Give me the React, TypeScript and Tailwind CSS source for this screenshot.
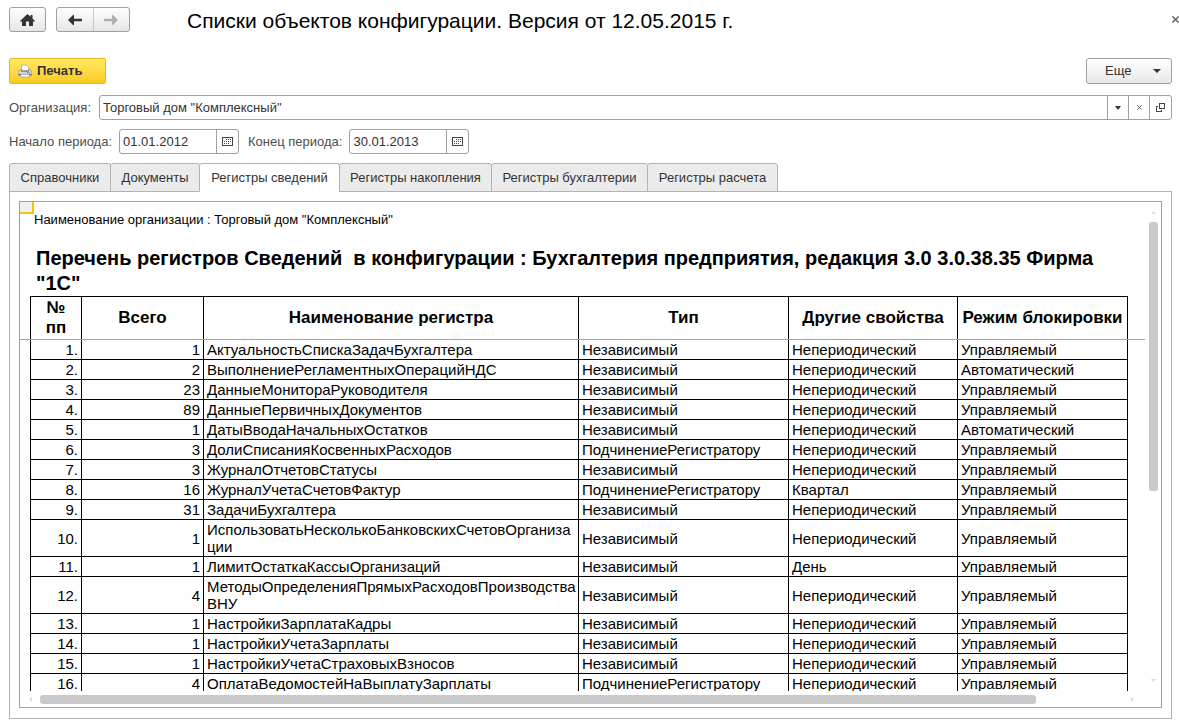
import React, { useState } from 'react';

interface RegisterRow {
  total: number;
  name: string;
  type: string;
  props: string;
  lock: string;
}

const IND = 'Независимый';
const SUB = 'ПодчинениеРегистратору';
const NP = 'Непериодический';
const MAN = 'Управляемый';
const AUTO = 'Автоматический';

const ROWS: RegisterRow[] = [
  { total: 1, name: 'АктуальностьСпискаЗадачБухгалтера', type: IND, props: NP, lock: MAN },
  { total: 2, name: 'ВыполнениеРегламентныхОперацийНДС', type: IND, props: NP, lock: AUTO },
  { total: 23, name: 'ДанныеМонитораРуководителя', type: IND, props: NP, lock: MAN },
  { total: 89, name: 'ДанныеПервичныхДокументов', type: IND, props: NP, lock: MAN },
  { total: 1, name: 'ДатыВводаНачальныхОстатков', type: IND, props: NP, lock: AUTO },
  { total: 3, name: 'ДолиСписанияКосвенныхРасходов', type: SUB, props: NP, lock: MAN },
  { total: 3, name: 'ЖурналОтчетовСтатусы', type: IND, props: NP, lock: MAN },
  { total: 16, name: 'ЖурналУчетаСчетовФактур', type: SUB, props: 'Квартал', lock: MAN },
  { total: 31, name: 'ЗадачиБухгалтера', type: IND, props: NP, lock: MAN },
  { total: 1, name: 'ИспользоватьНесколькоБанковскихСчетовОрганизации', type: IND, props: NP, lock: MAN },
  { total: 1, name: 'ЛимитОстаткаКассыОрганизаций', type: IND, props: 'День', lock: MAN },
  { total: 4, name: 'МетодыОпределенияПрямыхРасходовПроизводстваВНУ', type: IND, props: NP, lock: MAN },
  { total: 1, name: 'НастройкиЗарплатаКадры', type: IND, props: NP, lock: MAN },
  { total: 1, name: 'НастройкиУчетаЗарплаты', type: IND, props: NP, lock: MAN },
  { total: 1, name: 'НастройкиУчетаСтраховыхВзносов', type: IND, props: NP, lock: MAN },
  { total: 4, name: 'ОплатаВедомостейНаВыплатуЗарплаты', type: SUB, props: NP, lock: MAN },
];

const REPORT_TITLE =
  'Перечень регистров Сведений\u00a0 в конфигурации : Бухгалтерия предприятия, редакция 3.0 3.0.38.35 Фирма "1С"';

const TABS = [
  { label: 'Справочники', width: 'w-[102px]' },
  { label: 'Документы', width: 'w-[90px]' },
  { label: 'Регистры сведений', width: 'w-[141px]' },
  { label: 'Регистры накопления', width: 'w-[153px]' },
  { label: 'Регистры бухгалтерии', width: 'w-[157px]' },
  { label: 'Регистры расчета', width: 'w-[131px]' },
];

const HomeIcon = () => (
  <svg width="15" height="12" viewBox="0 0 15 12" fill="#333">
    <path d="M7.5 0 10.5 2.7V1h2v3.5L15 7v.6h-2V12H9V7.5H6V12H2V7.6H0V7z" />
  </svg>
);

const ArrowIcon: React.FC<{ color: string; flip?: boolean }> = ({ color, flip }) => (
  <svg width="14" height="10" viewBox="0 0 14 10" fill={color} className={flip ? 'rotate-180' : ''}>
    <path d="M0 5 5 0h1v3.8h8v2.4H6V10H5z" />
  </svg>
);

const PrinterIcon = () => (
  <svg width="14" height="14" viewBox="0 0 14 14">
    <path d="M3.5 7V1h5l2 2v4z" fill="#fff" stroke="#b9a98a" strokeWidth="0.8" />
    <path d="M2 5.5h1.5V7h7V5.5H12l1.7 2.3v3.4H.3V7.8z" fill="#d5d5d8" stroke="#8b8d92" strokeWidth="0.7" />
    <path d="M3 6.6h8v1H3z" fill="#77787d" />
    <path d="M9 8.3h1.3v1H9z" fill="#e04a2a" />
    <path d="M10.7 8.3H12v1h-1.3z" fill="#3aa545" />
    <path d="M.8 10h12.4v1.3H.8z" fill="#6d6e74" />
    <path d="M3 10.3h8l.5 2.7h-9z" fill="#fff" stroke="#8e8e8e" strokeWidth="0.6" />
  </svg>
);

const CalendarIcon = () => (
  <svg width="11" height="9" viewBox="0 0 11 9" shapeRendering="crispEdges">
    <path d="M0 0h11v9H0zM1 1v7h9V1z" fill="#444" fillRule="evenodd" />
    <path d="M4 2h1v1H4zM6 2h1v1H6zM8 2h1v1H8zM2 4h1v1H2zM4 4h1v1H4zM6 4h1v1H6zM8 4h1v1H8zM2 6h1v1H2zM4 6h1v1H4zM6 6h1v1H6z" fill="#444" />
  </svg>
);

const OpenIcon = () => (
  <svg width="9" height="9" viewBox="0 0 9 9" fill="none" stroke="#444" shapeRendering="crispEdges">
    <path d="M3.5.5h5v5h-5zM2 3.5H.5v5h5V7" />
  </svg>
);

const CrossIcon: React.FC<{ size: number }> = ({ size }) => (
  <svg width={size} height={size} viewBox="0 0 5 5" stroke="#555" strokeWidth="0.9">
    <path d="M.3.3 4.7 4.7M4.7.3.3 4.7" />
  </svg>
);

const Caret: React.FC<{ width: number }> = ({ width }) => (
  <svg width={width} height="4" viewBox="0 0 8 4" preserveAspectRatio="none" fill="#333">
    <path d="M0 0h8L4 4z" />
  </svg>
);

const ScrollArrow: React.FC<{ d: string }> = ({ d }) => (
  <svg width="5" height="5" viewBox="0 0 5 5" fill="#dcdcdc" className="shrink-0">
    <path d={d} />
  </svg>
);

const DateField: React.FC<{ id: string; label: string; value: string }> = ({ id, label, value }) => (
  <div className="flex items-center gap-[7px]">
    <label htmlFor={id} className="text-[#4d4d4d]">{label}</label>
    <div className="flex h-[25px] w-[120px] rounded-[3px] border border-[#a0a0a0]">
      <input id={id} type="text" defaultValue={value} className="min-w-0 flex-1 px-[3px] outline-none" />
      <button type="button" aria-label="Выбрать дату" className="flex w-[22px] items-center justify-center border-l border-[#a0a0a0]">
        <CalendarIcon />
      </button>
    </div>
  </div>
);

const Report = () => (
  <div className="relative min-w-0 overflow-hidden text-black">
    {/* current cell marker */}
    <div className="absolute top-0 left-0 h-3 w-[14px] border-r-2 border-b-2 border-[#fcc200] bg-[#f0f0f0]" />
    <p className="h-11 pt-2 pl-[14px] leading-5">
      Наименование организации : Торговый дом "Комплексный"
    </p>
    <h2 className="w-[1098px] pl-4 text-[20px] leading-[25px] font-bold">{REPORT_TITLE}</h2>
    <table className="ml-[10px] w-[1098px] table-fixed border-collapse text-[15px] leading-[17px] [&_td]:border [&_td]:border-black [&_td]:py-px [&_td]:pl-[3px] [&_th]:border [&_th]:border-black [&_th]:py-px">
      <colgroup>
        <col className="w-[51px]" />
        <col className="w-[122px]" />
        <col className="w-[375px]" />
        <col className="w-[210px]" />
        <col className="w-[169px]" />
        <col />
      </colgroup>
      <thead className="text-[17px] leading-5">
        <tr>
          <th className="px-2">№ пп</th>
          <th>Всего</th>
          <th>Наименование регистра</th>
          <th>Тип</th>
          <th>Другие свойства</th>
          <th className="whitespace-nowrap">Режим блокировки</th>
        </tr>
      </thead>
      <tbody>
        {ROWS.map((row, index) => (
          <tr key={row.name}>
            <td className="pr-[3px] text-right">{`${index + 1}.`}</td>
            <td className="pr-[3px] text-right">{row.total}</td>
            <td className="break-all">{row.name}</td>
            <td>{row.type}</td>
            <td>{row.props}</td>
            <td>{row.lock}</td>
          </tr>
        ))}
      </tbody>
    </table>
    {/* edge of the frozen header */}
    <div className="absolute top-[137px] left-0 h-px w-full bg-[#a0a0a0]" />
  </div>
);

const App: React.FC = () => {
  const [activeTab, setActiveTab] = useState<number>(2);

  return (
    <div className="flex h-screen flex-col overflow-hidden bg-white pt-[7px] pr-[7px] pb-1 pl-[9px] font-['Liberation_Sans',Arial,sans-serif] text-[13px] text-[#333]">
      <header className="flex h-[25px] shrink-0 items-center">
        <button type="button" aria-label="Домой" className="flex h-[25px] w-[37px] items-center justify-center rounded-[3px] border border-[#a0a0a0] bg-linear-to-b from-white to-[#e6e6e6]">
          <HomeIcon />
        </button>
        <div className="ml-[10px] flex h-[25px] w-[74px] rounded-[3px] border border-[#a0a0a0] bg-linear-to-b from-white to-[#e6e6e6]">
          <button type="button" aria-label="Назад" className="flex flex-1 items-center justify-center border-r border-[#c8c8c8]">
            <ArrowIcon color="#333" />
          </button>
          <button type="button" aria-label="Вперед" className="flex flex-1 items-center justify-center">
            <ArrowIcon color="#b0b0b0" flip />
          </button>
        </div>
        <h1 className="ml-[57px] flex-1 pt-px text-[21px] leading-[25px] text-black">
          Списки объектов конфигурации. Версия от 12.05.2015 г.
        </h1>
        <button type="button" aria-label="Закрыть" className="-mr-[7px]">
          <CrossIcon size={7} />
        </button>
      </header>

      <div className="mt-[26px] flex shrink-0 justify-between">
        <button type="button" className="flex h-[26px] w-[97px] items-center gap-[5px] rounded-[2px] border border-[#efb51c] bg-linear-to-b from-[#ffea60] to-[#fbca1c] pl-2 font-bold">
          <PrinterIcon />
          Печать
        </button>
        <button type="button" className="flex h-[26px] w-[86px] items-center justify-between rounded-[3px] border border-[#a0a0a0] bg-linear-to-b from-white to-[#e8e8e8] pr-[10px] pl-[18px]">
          Еще
          <Caret width={8} />
        </button>
      </div>

      <div className="mt-[11px] flex shrink-0 items-center">
        <label htmlFor="org" className="w-[90px] text-[#4d4d4d]">Организация:</label>
        <div className="flex h-[25px] flex-1 rounded-[3px] border border-[#a0a0a0]">
          <input id="org" type="text" defaultValue={'Торговый дом "Комплексный"'} className="min-w-0 flex-1 px-[3px] outline-none" />
          <button type="button" aria-label="Выбрать" className="flex w-[21px] items-center justify-center border-l border-[#a0a0a0]">
            <Caret width={6} />
          </button>
          <button type="button" aria-label="Очистить" className="flex w-[21px] items-center justify-center border-l border-[#a0a0a0]">
            <CrossIcon size={5} />
          </button>
          <button type="button" aria-label="Открыть" className="flex w-[22px] items-center justify-center border-l border-[#a0a0a0]">
            <OpenIcon />
          </button>
        </div>
      </div>

      <div className="mt-[9px] flex shrink-0 gap-[9px]">
        <DateField id="from" label="Начало периода:" value="01.01.2012" />
        <DateField id="to" label="Конец периода:" value="30.01.2013" />
      </div>

      <div role="tablist" className="z-10 mt-[9px] flex shrink-0">
        {TABS.map((tab, index) => (
          <button
            key={tab.label}
            type="button"
            role="tab"
            aria-selected={index === activeTab}
            onClick={() => setActiveTab(index)}
            className={`-mr-px h-[29px] rounded-t-[3px] border border-[#b3b3b3] whitespace-nowrap ${tab.width} ${
              index === activeTab ? 'border-b-white bg-white' : 'bg-[#ebebeb]'
            }`}
          >
            {tab.label}
          </button>
        ))}
      </div>

      <main className="-mt-px flex min-h-0 flex-1 border border-[#b3b3b3] p-[9px] pb-[10px]">
        <div className="grid min-h-0 min-w-0 flex-1 grid-cols-[minmax(0,1fr)_16px] grid-rows-[minmax(0,1fr)_16px] border border-[#a0a0a0]">
          <Report />
          <div className="flex flex-col items-center pt-2 pb-2">
            <ScrollArrow d="M0 4 2.5 1 5 4z" />
            <div className="my-[7px] flex w-full flex-1 justify-center">
              <div className="h-3/5 w-[9px] rounded-[3px] bg-[#c9c9c9]" />
            </div>
            <ScrollArrow d="M0 1 2.5 4 5 1z" />
          </div>
          <div className="flex items-center pr-[10px] pl-2">
            <ScrollArrow d="M4 0 1 2.5 4 5z" />
            <div className="mx-[7px] flex flex-1">
              <div className="h-[9px] w-[92%] rounded-[3px] bg-[#c9c9c9]" />
            </div>
            <ScrollArrow d="M1 0 4 2.5 1 5z" />
          </div>
        </div>
      </main>
    </div>
  );
};

export default App;
